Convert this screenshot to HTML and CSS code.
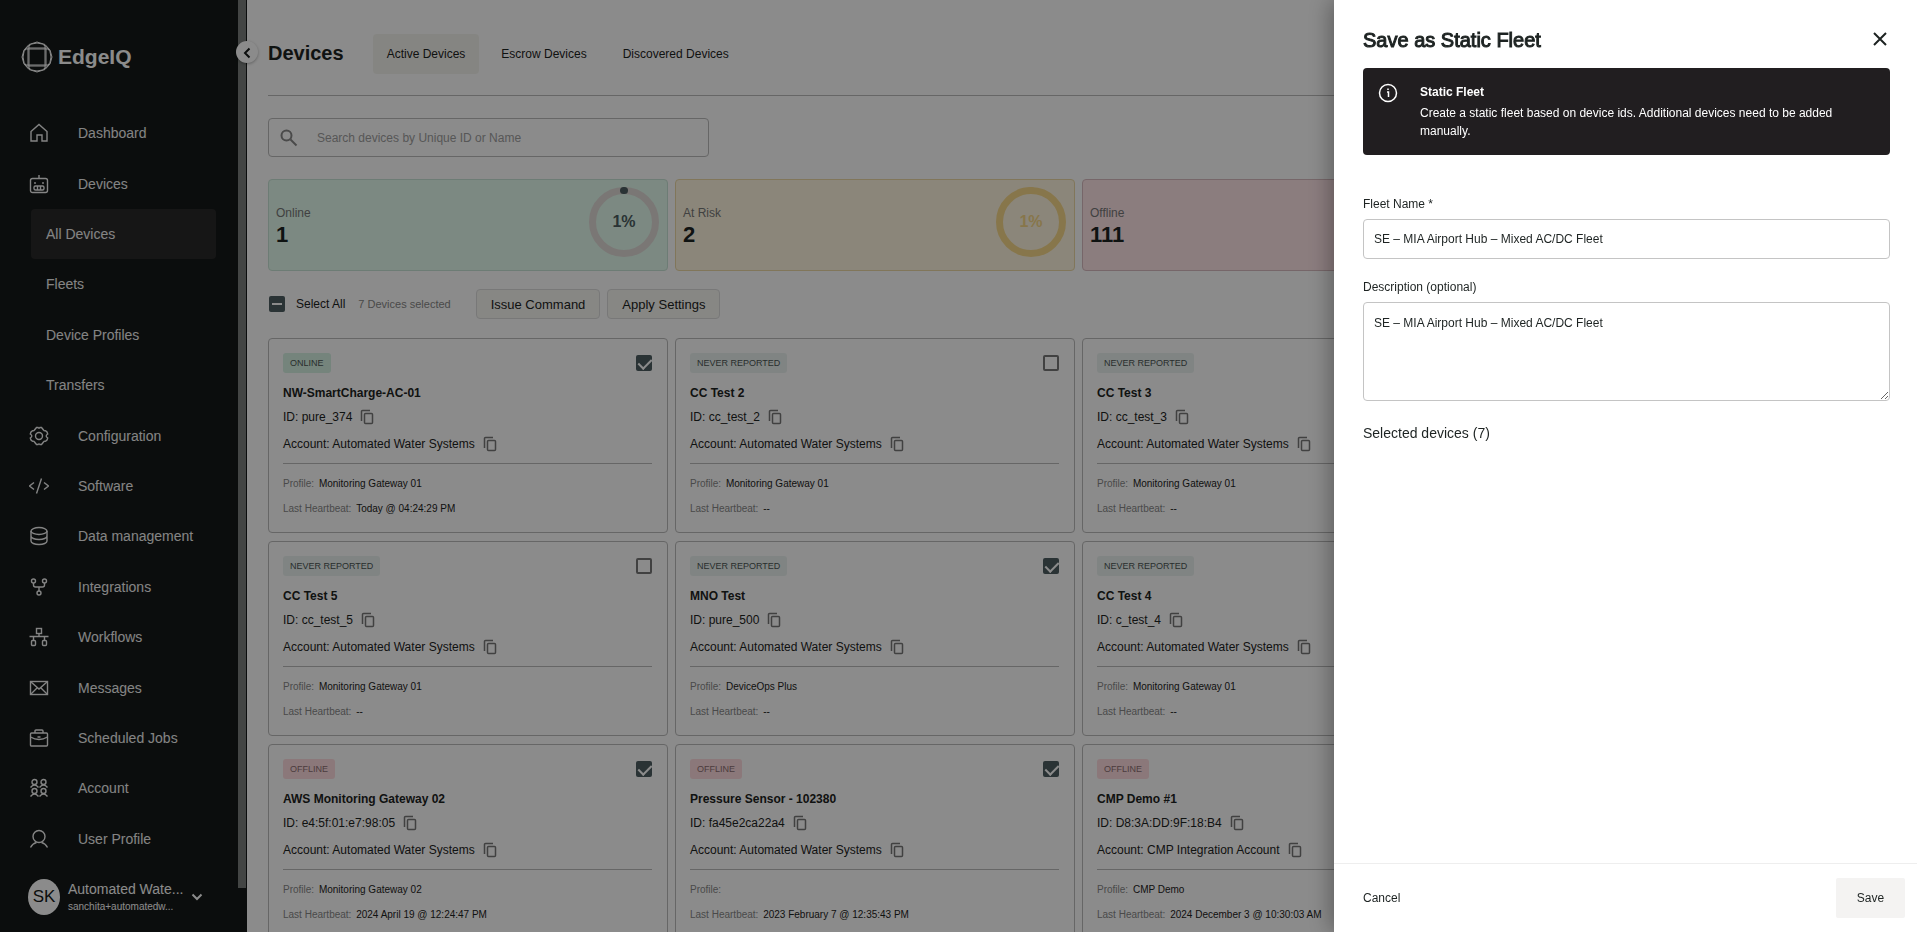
FILE: index.html
```html
<!DOCTYPE html>
<html lang="en">
<head>
  <meta charset="UTF-8">
  <title>EdgeIQ - Devices</title>
  <link rel="stylesheet" href="styles.css">
</head>
<body>

  <svg class="sprite" aria-hidden="true">
    <symbol id="copy" viewBox="0 0 14 16">
      <path d="M1.500 12V2.500a1 1 0 0 1 1-1H10" />
      <rect x="4.500" y="4.500" width="8" height="10" rx="1" />
    </symbol>
  </svg>

  <div class="app">
    <aside class="sidebar">
      <div class="logo">
        <svg width="32" height="32" viewBox="0 0 32 32">
          <circle cx="16" cy="16" r="14" />
          <path d="M16 1l8 2.500 5 5.500 2 7-2 7-5 5.500-8 2.500-8-2.500-5-5.500-2-7 2-7 5-5.500z" />
          <rect x="7" y="7" width="18" height="18" />
          <path d="M4 8h24M4 24h24M8 4v24M24 4v24" />
        </svg>
        <span>EdgeIQ</span>
      </div>

      <nav class="menu">
        <a href="#"><svg viewBox="0 0 20 20"><path d="M2 8.500L10 1.500l8 7V18h-5v-6H8v6H2z" /></svg>Dashboard</a>
        <a href="#"><svg viewBox="0 0 20 20"><rect x="1.500" y="4.500" width="17" height="14" rx="2" /><path d="M10 4.500V1M6 8v2M14 8v2" /><rect x="5" y="12" width="10" height="4" rx="1.500" /><path d="M8.500 12v4M11.500 12v4" /></svg>Devices</a>
        <a href="#" class="sub active">All Devices</a>
        <a href="#" class="sub">Fleets</a>
        <a href="#" class="sub">Device Profiles</a>
        <a href="#" class="sub">Transfers</a>
        <a href="#"><svg viewBox="0 0 20 20"><circle cx="10" cy="10" r="3.500" /><path d="M7.500 1.500h1.500q1 1.200 2 0h1.500l2 2.500q.5 1 2 .8l1.500 1.200.7 2q-1.500 1-1.500 2t1.500 2l-.7 2-1.500 1.200q-1.500-.2-2 .8l-2 2.500H11q-1-1.200-2 0H7.500l-2-2.500q-.5-1-2-.8L2 14l-.7-2q1.500-1 1.500-2T1.300 8L2 6l1.500-1.200q1.500.2 2-.8z" /></svg>Configuration</a>
        <a href="#"><svg viewBox="0 0 20 20"><path d="M5 6.500L.5 10 5 13.500M15 6.500l4.500 3.500-4.500 3.500M12.500 2.500l-5 15" /></svg>Software</a>
        <a href="#"><svg viewBox="0 0 20 20"><ellipse cx="10" cy="5" rx="8" ry="3.500" /><path d="M2 5v10c0 2 3.500 3.500 8 3.500s8-1.500 8-3.500V5M2 10c0 2 3.500 3.500 8 3.500s8-1.500 8-3.500" /></svg>Data management</a>
        <a href="#"><svg viewBox="0 0 20 20"><circle cx="4.500" cy="4" r="2" /><circle cx="15.500" cy="4" r="2" /><circle cx="10" cy="16" r="2" /><path d="M4.500 6v2q0 2 2 2h7q2 0 2-2V6M10 10v4" /></svg>Integrations</a>
        <a href="#"><svg viewBox="0 0 20 20"><rect x="7.500" y="1.500" width="5" height="5" /><rect x="2.500" y="13.500" width="4" height="5" rx="1" /><rect x="13.500" y="13.500" width="4" height="5" rx="1" /><path d="M10 6.500v3M.5 9.500h19M4.500 9.500v4M15.500 9.500v4" /></svg>Workflows</a>
        <a href="#"><svg viewBox="0 0 20 20"><rect x="1.500" y="3.500" width="17" height="13" /><path d="M1.500 3.500L10 11l8.500-7.500M1.500 16.500L8 10M18.500 16.500L12 10" /></svg>Messages</a>
        <a href="#"><svg viewBox="0 0 20 20"><rect x="1.500" y="5" width="17" height="13" rx="1" /><path d="M6 5V3q0-1 1-1h6q1 0 1 1v2M1.500 9q8.500 5 17 0M8.500 9h3" /></svg>Scheduled Jobs</a>
        <a href="#"><svg viewBox="0 0 20 20"><circle cx="5.500" cy="4" r="2.500" /><circle cx="14.500" cy="4" r="2.500" /><circle cx="5.500" cy="13" r="2.500" /><circle cx="14.500" cy="13" r="2.500" /><path d="M1.500 9.500q4-5 8 0M10.500 9.500q4-5 8 0M1.500 18.500q4-5 8 0M10.500 18.500q4-5 8 0" /></svg>Account</a>
        <a href="#"><svg viewBox="0 0 20 20"><circle cx="10" cy="7.500" r="6" /><path d="M1.500 18.500q2-4 6-5M18.500 18.500q-2-4-6-5" /></svg>User Profile</a>
      </nav>

      <button class="user">
        <span class="avatar">SK</span>
        <span class="who">
          <span class="who-name">Automated Wate...</span>
          <span class="who-mail">sanchita+automatedw...</span>
        </span>
        <svg width="12" height="8" viewBox="0 0 12 8"><path d="M1.500 1.500L6 6l4.500-4.500" /></svg>
      </button>
      <div class="scroll-thumb"></div>
      <button class="collapse" aria-label="Collapse menu">
        <svg width="8" height="12" viewBox="0 0 8 12"><path d="M6.500 1.500L2 6l4.500 4.500" /></svg>
      </button>
    </aside>

    <main class="main">
      <header class="top">
        <h1>Devices</h1>
        <button class="tab active">Active Devices</button>
        <button class="tab">Escrow Devices</button>
        <button class="tab">Discovered Devices</button>
      </header>

      <label class="search">
        <svg width="18" height="18" viewBox="0 0 18 18"><circle cx="6.500" cy="6.500" r="5" /><path d="M10.500 10.500l6 6" /></svg>
        <input type="search" placeholder="Search devices by Unique ID or Name" aria-label="Search devices">
      </label>

      <section class="grid stats">
        <div class="stat online">
          <div><p>Online</p><strong>1</strong></div>
          <svg width="70" height="70" viewBox="0 0 70 70">
            <circle class="track" cx="35" cy="35" r="31.500" />
            <path class="value" d="M34.500 3.500h1" />
            <text x="35" y="40">1%</text>
          </svg>
        </div>
        <div class="stat risk">
          <div><p>At Risk</p><strong>2</strong></div>
          <svg width="70" height="70" viewBox="0 0 70 70">
            <circle class="track" cx="35" cy="35" r="31.500" />
            <path class="value" d="M34.500 3.500h1" />
            <text x="35" y="40">1%</text>
          </svg>
        </div>
        <div class="stat offline">
          <div><p>Offline</p><strong>111</strong></div>
        </div>
      </section>

      <div class="bulk">
        <input type="checkbox" id="selectAll" class="partial">
        <label for="selectAll">Select All</label>
        <span class="count">7 Devices selected</span>
        <button>Issue Command</button>
        <button>Apply Settings</button>
      </div>

      <section class="grid cards">
        <article class="card">
          <div class="card-top"><span class="badge green">ONLINE</span><input type="checkbox" aria-label="Select NW-SmartCharge-AC-01" checked></div>
          <h2>NW-SmartCharge-AC-01</h2>
          <p class="id">ID: pure_374 <svg><use href="#copy" /></svg></p>
          <p class="account">Account: Automated Water Systems <svg><use href="#copy" /></svg></p>
          <div class="meta">
            <p>Profile: <b>Monitoring Gateway 01</b></p>
            <p>Last Heartbeat: <b>Today @ 04:24:29 PM</b></p>
          </div>
        </article>
        <article class="card">
          <div class="card-top"><span class="badge">NEVER REPORTED</span><input type="checkbox" aria-label="Select CC Test 2"></div>
          <h2>CC Test 2</h2>
          <p class="id">ID: cc_test_2 <svg><use href="#copy" /></svg></p>
          <p class="account">Account: Automated Water Systems <svg><use href="#copy" /></svg></p>
          <div class="meta">
            <p>Profile: <b>Monitoring Gateway 01</b></p>
            <p>Last Heartbeat: <b>--</b></p>
          </div>
        </article>
        <article class="card">
          <div class="card-top"><span class="badge">NEVER REPORTED</span></div>
          <h2>CC Test 3</h2>
          <p class="id">ID: cc_test_3 <svg><use href="#copy" /></svg></p>
          <p class="account">Account: Automated Water Systems <svg><use href="#copy" /></svg></p>
          <div class="meta">
            <p>Profile: <b>Monitoring Gateway 01</b></p>
            <p>Last Heartbeat: <b>--</b></p>
          </div>
        </article>
        <article class="card">
          <div class="card-top"><span class="badge">NEVER REPORTED</span><input type="checkbox" aria-label="Select CC Test 5"></div>
          <h2>CC Test 5</h2>
          <p class="id">ID: cc_test_5 <svg><use href="#copy" /></svg></p>
          <p class="account">Account: Automated Water Systems <svg><use href="#copy" /></svg></p>
          <div class="meta">
            <p>Profile: <b>Monitoring Gateway 01</b></p>
            <p>Last Heartbeat: <b>--</b></p>
          </div>
        </article>
        <article class="card">
          <div class="card-top"><span class="badge">NEVER REPORTED</span><input type="checkbox" aria-label="Select MNO Test" checked></div>
          <h2>MNO Test</h2>
          <p class="id">ID: pure_500 <svg><use href="#copy" /></svg></p>
          <p class="account">Account: Automated Water Systems <svg><use href="#copy" /></svg></p>
          <div class="meta">
            <p>Profile: <b>DeviceOps Plus</b></p>
            <p>Last Heartbeat: <b>--</b></p>
          </div>
        </article>
        <article class="card">
          <div class="card-top"><span class="badge">NEVER REPORTED</span></div>
          <h2>CC Test 4</h2>
          <p class="id">ID: c_test_4 <svg><use href="#copy" /></svg></p>
          <p class="account">Account: Automated Water Systems <svg><use href="#copy" /></svg></p>
          <div class="meta">
            <p>Profile: <b>Monitoring Gateway 01</b></p>
            <p>Last Heartbeat: <b>--</b></p>
          </div>
        </article>
        <article class="card">
          <div class="card-top"><span class="badge red">OFFLINE</span><input type="checkbox" aria-label="Select AWS Monitoring Gateway 02" checked></div>
          <h2>AWS Monitoring Gateway 02</h2>
          <p class="id">ID: e4:5f:01:e7:98:05 <svg><use href="#copy" /></svg></p>
          <p class="account">Account: Automated Water Systems <svg><use href="#copy" /></svg></p>
          <div class="meta">
            <p>Profile: <b>Monitoring Gateway 02</b></p>
            <p>Last Heartbeat: <b>2024 April 19 @ 12:24:47 PM</b></p>
          </div>
        </article>
        <article class="card">
          <div class="card-top"><span class="badge red">OFFLINE</span><input type="checkbox" aria-label="Select Pressure Sensor - 102380" checked></div>
          <h2>Pressure Sensor - 102380</h2>
          <p class="id">ID: fa45e2ca22a4 <svg><use href="#copy" /></svg></p>
          <p class="account">Account: Automated Water Systems <svg><use href="#copy" /></svg></p>
          <div class="meta">
            <p>Profile:</p>
            <p>Last Heartbeat: <b>2023 February 7 @ 12:35:43 PM</b></p>
          </div>
        </article>
        <article class="card">
          <div class="card-top"><span class="badge red">OFFLINE</span></div>
          <h2>CMP Demo #1</h2>
          <p class="id">ID: D8:3A:DD:9F:18:B4 <svg><use href="#copy" /></svg></p>
          <p class="account">Account: CMP Integration Account <svg><use href="#copy" /></svg></p>
          <div class="meta">
            <p>Profile: <b>CMP Demo</b></p>
            <p>Last Heartbeat: <b>2024 December 3 @ 10:30:03 AM</b></p>
          </div>
        </article>
      </section>
    </main>
  </div>

  <div class="backdrop"></div>

  <form class="drawer">
    <div class="drawer-body">
      <div class="drawer-head">
        <h2>Save as Static Fleet</h2>
        <button type="button" class="close" aria-label="Close">
          <svg width="14" height="14" viewBox="0 0 14 14"><path d="M1 1l12 12M13 1L1 13" /></svg>
        </button>
      </div>
      <div class="notice">
        <svg width="20" height="20" viewBox="0 0 20 20"><circle cx="10" cy="10" r="8.500" /><path d="M9 9h1.500v5M10 5.500v1.500" /></svg>
        <div>
          <strong>Static Fleet</strong>
          <p>Create a static fleet based on device ids. Additional devices need to be added manually.</p>
        </div>
      </div>
      <label for="fleetName">Fleet Name *</label>
      <input type="text" id="fleetName" value="SE – MIA Airport Hub – Mixed AC/DC Fleet">
      <label for="fleetDesc">Description (optional)</label>
      <textarea id="fleetDesc">SE – MIA Airport Hub – Mixed AC/DC Fleet</textarea>
      <p class="selected">Selected devices (7)</p>
    </div>
    <div class="drawer-foot">
      <button type="button" class="cancel">Cancel</button>
      <button type="button" class="save">Save</button>
    </div>
  </form>

</body>
</html>
```

FILE: styles.css
```css
* {
  box-sizing: border-box;
}
body {
  margin: 0;
  font-family: "Liberation Sans", Arial, sans-serif;
  font-size: 12px;
  color: #1d2322;
  overflow: hidden;
}
h1, h2, p {
  margin: 0;
}
button, input, textarea {
  font: inherit;
  color: inherit;
}
button {
  cursor: pointer;
}
svg {
  fill: none;
  stroke: currentColor;
  flex: none;
}
.sprite {
  position: absolute;
  width: 0;
  height: 0;
}
.app {
  display: flex;
  height: 100vh;
}

/* sidebar */
.sidebar {
  position: relative;
  display: flex;
  flex-direction: column;
  flex: none;
  width: 247px;
  background: #151918;
  color: #fff;
}
.logo {
  display: flex;
  align-items: center;
  gap: 5px;
  height: 108px;
  padding: 6px 0 0 21px;
  font-size: 21px;
  font-weight: bold;
}
.menu {
  display: grid;
  grid-auto-rows: 1fr;
  flex: 1;
  padding: 0 31px 0 29px;
}
.menu a {
  display: flex;
  align-items: center;
  gap: 29px;
  color: #f2f2f2;
  font-size: 14px;
  text-decoration: none;
}
.menu svg {
  width: 20px;
  height: 20px;
  stroke-width: 1.4;
}
.menu .sub {
  margin-left: 2px;
  padding-left: 15px;
  border-radius: 4px;
}
.menu .active {
  background: #292929;
}
.user {
  display: flex;
  align-items: center;
  gap: 8px;
  height: 68px;
  padding: 0 0 2px 28px;
  border: 0;
  background: none;
  text-align: left;
}
.user svg {
  stroke-width: 2;
}
.avatar {
  width: 32px;
  border-radius: 50%;
  background: #fff;
  color: #151918;
  font-size: 17px;
  line-height: 36px;
  text-align: center;
}
.who span {
  display: block;
}
.who-name {
  font-size: 14px;
  line-height: 20px;
}
.who-mail {
  font-size: 10px;
  line-height: 16px;
}
.scroll-thumb {
  position: absolute;
  top: 0;
  right: 1px;
  width: 8px;
  height: 888px;
  background: #7b7f7d;
}
.collapse {
  position: absolute;
  top: 41px;
  right: -11px;
  width: 22px;
  height: 22px;
  padding: 4px 0 0;
  border: 0;
  border-radius: 50%;
  background: #fff;
  color: #151918;
  line-height: 1;
  box-shadow: 0 1px 3px rgba(0, 0, 0, .3);
}
.collapse svg {
  stroke-width: 2;
}

/* devices page */
.main {
  flex: 1;
  min-width: 0;
  padding: 0 28px 0 21px;
}
.top {
  display: flex;
  align-items: center;
  height: 96px;
  padding-top: 12px;
  border-bottom: 1px solid #bbb;
}
.top h1 {
  margin-right: 29px;
  font-size: 20px;
}
.tab {
  height: 40px;
  margin-right: 8px;
  padding: 0 14px;
  border: 0;
  border-radius: 4px;
  background: none;
}
.tab.active {
  background: #f5f5ef;
}
.search {
  display: flex;
  align-items: center;
  gap: 19px;
  width: 441px;
  height: 39px;
  margin-top: 22px;
  padding: 0 11px;
  border: 1px solid #bbb;
  border-radius: 4px;
  color: #888;
}
.search svg {
  stroke-width: 2;
}
.search input {
  flex: 1;
  padding: 0;
  border: 0;
  background: none;
  outline: none;
}
.search input::placeholder {
  color: #a0a0a0;
}
.grid {
  display: grid;
  grid-template-columns: repeat(4, 1fr);
  gap: 8px 7px;
}
.stats {
  margin-top: 22px;
}
.stat {
  display: flex;
  align-items: center;
  justify-content: space-between;
  height: 92px;
  padding: 0 8px 6px 7px;
  border: 1px solid;
  border-radius: 4px;
}
.stat p {
  margin-top: 6px;
  color: #777;
  line-height: 18px;
}
.stat strong {
  font-size: 22px;
  line-height: 25px;
}
.stat text {
  fill: currentColor;
  stroke: none;
  font-size: 16px;
  font-weight: bold;
  text-anchor: middle;
}
.track, .value {
  stroke-width: 7;
}
.value {
  stroke-linecap: round;
}
.online {
  background: #e3fbee;
  border-color: #c9e3d6;
}
.online svg {
  color: #4d5e61;
}
.online .track {
  stroke: #e0dad7;
}
.risk {
  background: #fff6e0;
  border-color: #edd9a6;
}
.risk svg {
  color: #f8d98a;
}
.offline {
  background: #ffe5e8;
  border-color: #d9bcc0;
}
input[type="checkbox"] {
  appearance: none;
  width: 16px;
  height: 16px;
  margin: 0;
  border: 2px solid #777;
  border-radius: 2px;
}
input[type="checkbox"]:checked, input.partial {
  border: 0;
  background: #4d5e61;
}
input[type="checkbox"]:checked::before {
  content: "";
  display: block;
  width: 6px;
  height: 11px;
  margin: 1px 0 0 5px;
  border: solid #fff;
  border-width: 0 2px 2px 0;
  transform: rotate(45deg);
}
input.partial::before {
  content: "";
  display: block;
  height: 2px;
  margin: 7px 3px;
  background: #fff;
}
.bulk {
  display: flex;
  align-items: center;
  height: 30px;
  margin: 18px 0 19px;
  padding-left: 1px;
}
.bulk label {
  margin: 0 13px 0 11px;
}
.bulk .count {
  margin-right: 25px;
  color: #888;
  font-size: 11px;
}
.bulk button {
  height: 30px;
  margin-right: 7px;
  padding: 0 14px;
  border: 1px solid #ddd;
  border-radius: 4px;
  background: #f7f7f2;
  font-size: 13px;
}
.card {
  height: 195px;
  padding: 14px 15px 14px 14px;
  border: 1px solid #bbb;
  border-radius: 4px;
}
.card:nth-child(3n + 1) {
  grid-column-start: 1;
}
.card-top {
  display: flex;
  align-items: center;
  justify-content: space-between;
  height: 20px;
}
.badge {
  padding: 0 7px;
  border-radius: 3px;
  background: #ebf3f1;
  color: #4c5654;
  font-size: 9px;
  line-height: 20px;
}
.badge.green {
  background: #d6f2e4;
}
.badge.red {
  background: #ffdde0;
  color: #8c6f72;
}
.card h2 {
  margin-top: 10px;
  font-size: 12px;
  line-height: 20px;
}
.id, .account {
  display: flex;
  align-items: center;
  gap: 8px;
  height: 27px;
}
.card svg {
  width: 14px;
  height: 16px;
  color: #777;
  stroke-width: 1.5;
}
.card .meta {
  margin-top: 6px;
  padding-top: 7px;
  border-top: 1px solid #bbb;
  color: #888;
  font-size: 10px;
  line-height: 25px;
}
.meta b {
  margin-left: 2px;
  color: #1d2322;
  font-weight: normal;
}

.backdrop {
  position: fixed;
  inset: 0;
  background: rgba(0, 0, 0, .455);
}

/* drawer */
.drawer {
  position: fixed;
  top: 0;
  right: 0;
  bottom: 0;
  display: flex;
  flex-direction: column;
  width: 583px;
  background: #fff;
  box-shadow: -3px 0 22px rgba(0, 0, 0, .35);
}
.drawer-body {
  display: flex;
  flex-direction: column;
  flex: 1;
  padding: 12px 27px 0 29px;
}
.drawer-head {
  display: flex;
  align-items: center;
  justify-content: space-between;
  height: 56px;
}
.drawer-head h2 {
  font-size: 20px;
  font-weight: normal;
  -webkit-text-stroke: 1px;
}
.close {
  height: 22px;
  padding: 3px;
  border: 0;
  background: none;
}
.close svg {
  stroke-width: 2;
}
.notice {
  display: flex;
  gap: 22px;
  margin-bottom: 38px;
  padding: 15px 36px 15px 15px;
  border-radius: 4px;
  background: #211e20;
  color: #fff;
  line-height: 18px;
}
.notice svg {
  stroke-width: 1.5;
}
.notice strong {
  display: block;
  margin-bottom: 3px;
}
.drawer label {
  margin-bottom: 4px;
  line-height: 22px;
}
.drawer input, .drawer textarea {
  padding: 0 10px;
  border: 1px solid #c4c4c4;
  border-radius: 4px;
  background: #fff;
}
.drawer input {
  height: 40px;
  margin-bottom: 17px;
}
.drawer textarea {
  height: 99px;
  padding-top: 13px;
}
.selected {
  margin-top: 22px;
  font-size: 14px;
  line-height: 20px;
}
.drawer-foot {
  display: flex;
  align-items: center;
  justify-content: space-between;
  height: 69px;
  padding: 0 12px 0 29px;
  border-top: 1px solid #eee;
}
.cancel, .save {
  height: 40px;
  padding: 0;
  border: 0;
  border-radius: 2px;
  background: none;
}
.save {
  width: 69px;
  background: #f4f3f2;
}
```
